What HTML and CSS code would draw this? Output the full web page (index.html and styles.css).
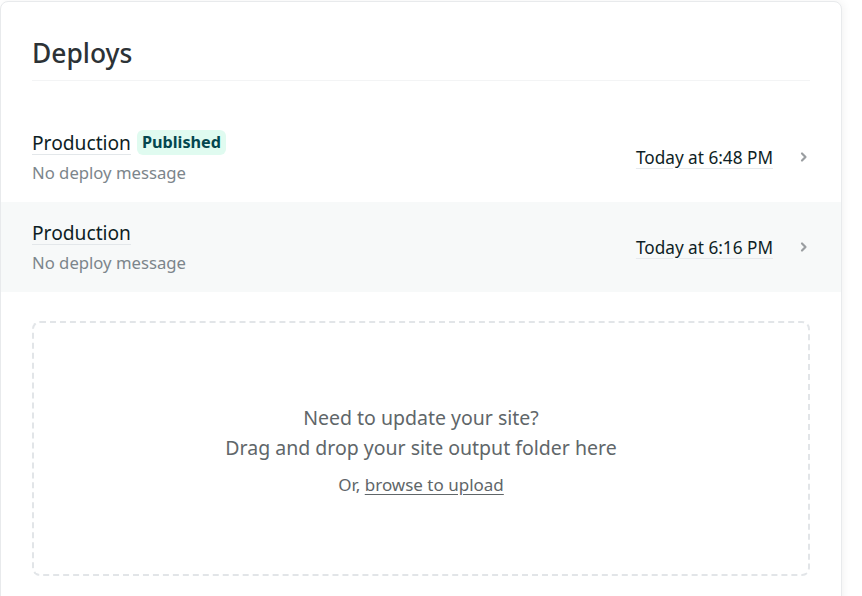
FILE: index.html
```html
<!DOCTYPE html>
<html lang="en">
<head>
<meta charset="utf-8">
<title>Deploys</title>
<link rel="stylesheet" href="styles.css">
</head>
<body>
<section class="card">
  <header class="card-header">
    <h2 class="card-title">Deploys</h2>
  </header>
  <ul class="deploy-list">
    <li class="deploy">
      <div class="deploy-main">
        <div class="deploy-title"><span class="ctx">Production</span><span class="badge">Published</span></div>
        <div class="deploy-msg">No deploy message</div>
      </div>
      <div class="deploy-time"><span class="time">Today at 6:48 PM</span></div>
      <svg class="chev" viewBox="0 0 10 12" width="10" height="12"><path d="M3 2.5 L6.5 6 L3 9.5" fill="none" stroke="#9a9ea1" stroke-width="2.2" stroke-linecap="round" stroke-linejoin="round"/></svg>
    </li>
    <li class="deploy hover">
      <div class="deploy-main">
        <div class="deploy-title"><span class="ctx">Production</span></div>
        <div class="deploy-msg">No deploy message</div>
      </div>
      <div class="deploy-time"><span class="time">Today at 6:16 PM</span></div>
      <svg class="chev" viewBox="0 0 10 12" width="10" height="12"><path d="M3 2.5 L6.5 6 L3 9.5" fill="none" stroke="#9a9ea1" stroke-width="2.2" stroke-linecap="round" stroke-linejoin="round"/></svg>
    </li>
  </ul>
  <div class="dropzone">
    <p class="dz-line">Need to update your site?</p>
    <p class="dz-line">Drag and drop your site output folder here</p>
    <p class="dz-small">Or, <a href="#" class="dz-link">browse to upload</a></p>
  </div>
</section>
</body>
</html>
```
FILE: styles.css
```css
html, body {
  margin: 0;
  padding: 0;
  background: #ffffff;
  font-family: "Noto Sans", "Open Sans", "DejaVu Sans", sans-serif;
}
body {
  padding-top: 1px;
  overflow: hidden;
  height: 596px;
}
.card {
  width: 840px;
  border: 1px solid #e8eaec;
  border-radius: 8px;
  box-shadow: 2px 0 8px rgba(0, 0, 0, 0.05);
  background: #fff;
  padding-bottom: 40px;
  box-sizing: content-box;
}
.card-header {
  margin: 0 31px 0 31px;
  padding-top: 35px;
  padding-bottom: 11px;
  border-bottom: 1px solid #f3f4f5;
}
.card-title {
  margin: 0;
  font-size: 26.4px;
  font-weight: 500;
  line-height: 32px;
  color: #2c3236;
}
.deploy-list {
  list-style: none;
  margin: 31px 0 0 0;
  padding: 0;
}
.deploy {
  display: flex;
  align-items: center;
  height: 90px;
  box-sizing: border-box;
  padding: 0 31px;
}
.deploy.hover {
  background: #f7f9f9;
}
.deploy-main {
  flex: 1;
}
.deploy-title {
  display: flex;
  align-items: center;
  gap: 6px;
  height: 30px;
  margin-top: 1px;
}
.ctx {
  font-size: 19.2px;
  color: #0e1e25;
  text-decoration: underline;
  text-decoration-color: #e3e7ea;
  text-underline-offset: 4px;
}
.badge {
  display: inline-block;
  background: #e0fbf0;
  color: #04474f;
  font-weight: 700;
  font-size: 16.2px;
  line-height: 25px;
  padding: 0 5px;
  border-radius: 6px;
}
.deploy-msg {
  font-size: 16.7px;
  line-height: 30px;
  color: #7c858b;
}
.deploy-time {
  font-size: 17.2px;
  color: #0e1e25;
}
.time {
  text-decoration: underline;
  text-decoration-color: #e6e9ec;
  text-underline-offset: 4px;
}
.chev {
  margin-left: 26px;
  margin-right: 1px;
  flex: none;
}
.dropzone {
  margin: 29px 31px 0 31px;
  height: 255px;
  box-sizing: border-box;
  border: 2px dashed #e2e5e8;
  border-radius: 8px;
  display: flex;
  flex-direction: column;
  align-items: center;
  justify-content: center;
  padding-top: 2px;
}
.dz-line {
  margin: 0;
  font-size: 19.5px;
  line-height: 30px;
  color: #606669;
}
.dz-small {
  margin: 10px 0 0 0;
  font-size: 17px;
  line-height: 24px;
  color: #606669;
}
.dz-link {
  color: #606669;
  text-decoration: underline;
  text-underline-offset: 3px;
}
```
